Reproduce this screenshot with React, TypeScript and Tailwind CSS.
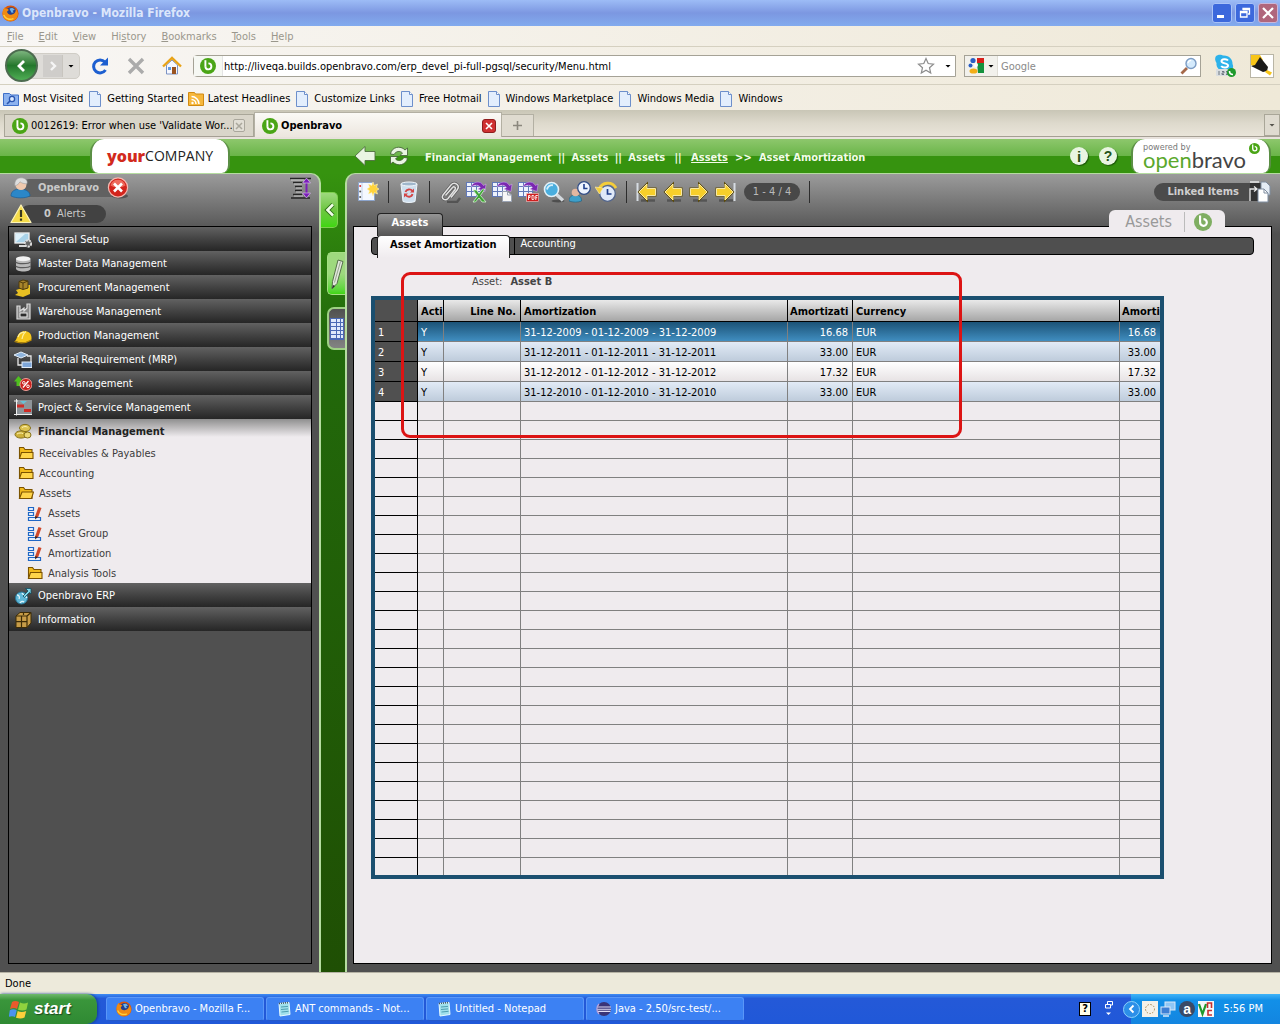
import React, { useState } from 'react';

type IconProps = { className?: string };

function Glyph({ box = 22, className = 'w-[22px] h-[22px]', children }: { box?: number; className?: string; children: React.ReactNode }) {
    return (
        <svg viewBox={`0 0 ${box} ${box}`} className={`shrink-0 ${className}`} fill="none" aria-hidden="true">
            {children}
        </svg>
    );
}

/* ---------- logos ---------- */

function BravoMark({ className = 'w-4 h-4', color = '#4aa516' }: IconProps & { color?: string }) {
    return (
        <Glyph box={16} className={className}>
            <circle cx="8" cy="8" r="8" fill={color} />
            <path d="M5.4 2.2v6.6" stroke="#fff" strokeWidth="1.9" />
            <path d="M5.4 8.6a3 3 0 1 0 3-3.2" stroke="#fff" strokeWidth="1.9" />
        </Glyph>
    );
}

function FirefoxMark({ className = 'w-4 h-4' }: IconProps) {
    return (
        <Glyph box={16} className={className}>
            <circle cx="8" cy="8" r="7.6" fill="#d9560b" />
            <circle cx="8.600" cy="6.600" r="4.600" fill="#23408f" />
            <path d="M7 3.500c1.500-1.200 4-.8 5 1l-2 .8 1 1.700-2 .2z" fill="#6fb5e8" />
            <path d="M.6 6C1 3.800 2 2.600 3 2l.4 1.800C4.600 3.400 5.500 3.700 6.400 4.600L4.800 6.200c0 2.200 2.400 3.600 4.600 2.800 2-.5 3.600-2 3.800-5 2 2.600 2.400 5.400.8 8-2 3-6.400 4.200-9.800 2.400C1.200 12.800 0 9.400.6 6z" fill="#f08a12" />
            <path d="M1.600 9.500c1.400 3.400 5.600 4.900 9.200 3.300" stroke="#ffd23c" strokeWidth="1.300" />
        </Glyph>
    );
}

/* ---------- browser chrome icons ---------- */

function ReloadIcon() {
    return (
        <Glyph box={20} className="w-5 h-5">
            <path d="M15.500 14a6.500 6.500 0 1 1-.6-8" stroke="#1d5fd0" strokeWidth="3" />
            <path d="M18 1.500v8h-8z" fill="#1d5fd0" />
        </Glyph>
    );
}

function StopIcon() {
    return (
        <Glyph box={20} className="w-5 h-5">
            <path d="M3 3l14 14M17 3L3 17" stroke="#ababab" strokeWidth="3.400" />
        </Glyph>
    );
}

function HomeIcon() {
    return (
        <Glyph box={20} className="w-5 h-5">
            <path d="M4.500 9v9h11V9L10 4z" fill="#f6f8ff" stroke="#7c93c4" />
            <path d="M1 10.500L10 2l9 8.500" stroke="#e8a317" strokeWidth="2.400" />
            <rect x="6" y="11" width="3" height="3" fill="#5f9be6" />
            <rect x="10" y="11" width="4" height="7" fill="#9a5420" />
        </Glyph>
    );
}

function PageIcon() {
    return (
        <Glyph box={16} className="w-4 h-4">
            <path d="M2.500.5h8l3 3v12h-11z" fill="#e3eefd" stroke="#6d8fcb" />
            <path d="M10.500.5v3h3" fill="#fff" stroke="#6d8fcb" />
        </Glyph>
    );
}

function SearchFolderIcon() {
    return (
        <Glyph box={16} className="w-4 h-4">
            <path d="M.5 2.500h6l1.500 1.500h7.500v10.500H.5z" fill="#8db2ef" stroke="#3f6fc8" />
            <circle cx="9" cy="8" r="2.600" fill="#dceaff" stroke="#2b55b0" strokeWidth="1.300" />
            <path d="M7 10l-3 3" stroke="#2b55b0" strokeWidth="1.600" />
        </Glyph>
    );
}

function FeedIcon() {
    return (
        <Glyph box={16} className="w-4 h-4">
            <path d="M.5 1.500h6l1 1.500h8v11.500H.5z" fill="#f6b73c" stroke="#d08a12" />
            <circle cx="4.500" cy="12" r="1.200" fill="#fff" />
            <path d="M3.500 8.500a4.500 4.500 0 0 1 4.500 4.500M3.500 5.500A7.500 7.500 0 0 1 11 13" stroke="#fff" strokeWidth="1.500" />
        </Glyph>
    );
}

function StarIcon() {
    return (
        <Glyph box={18} className="w-[18px] h-[18px]">
            <path d="M9 1.500l2.200 5 5.300.6-4 3.600 1.200 5.300L9 13.300 4.300 16l1.200-5.300-4-3.600 5.300-.6z" fill="#fff" stroke="#8c8c8c" strokeWidth="1.200" />
        </Glyph>
    );
}

function Caret({ className = 'text-black' }: IconProps) {
    return (
        <Glyph box={6} className={`w-[6px] h-[6px] ${className}`}>
            <path d="M.5 2h5L3 4.500z" fill="currentColor" />
        </Glyph>
    );
}

function GoogleMark() {
    return (
        <Glyph box={17} className="w-[17px] h-[17px]">
            <path d="M9 1h7v5H9z" fill="#d8201a" />
            <path d="M9 6h7v10h-6z" fill="#14923e" />
            <circle cx="5" cy="3.500" r="2.600" fill="#2a5fc4" />
            <circle cx="2.500" cy="8.500" r="2" fill="#2a5fc4" />
            <circle cx="8" cy="8" r="2" fill="#fff" />
            <ellipse cx="5.500" cy="14" rx="4" ry="2.600" fill="#f2ae18" />
        </Glyph>
    );
}

function LensIcon() {
    return (
        <Glyph box={18} className="w-[18px] h-[18px]">
            <path d="M7 11l-5.500 5.500" stroke="#a5694a" strokeWidth="2.800" />
            <circle cx="11" cy="6.500" r="5" fill="#d4eafc" stroke="#7c9cc4" strokeWidth="1.400" />
            <path d="M8 6c.4-1.600 1.600-2.600 3.200-2.600" stroke="#fff" strokeWidth="1.300" />
        </Glyph>
    );
}

function SkypeIcon() {
    return (
        <Glyph box={24} className="w-6 h-6">
            <path d="M3 2c3-2 6-1 7-.5 6-.5 10 4 9.500 8.500 2 4-1 8-5.500 7-7 1-11-3-10.500-8C2 7 1.500 4 3 2z" fill="#2db2ea" />
            <path d="M15 6.500c-1.500-2-6.500-1.500-6.500.8 0 2.700 6.500 1.500 6.500 4.200 0 2.300-5 2.800-6.800.5" stroke="#fff" strokeWidth="2" />
            <rect x="3" y="15" width="14" height="7" rx="1" fill="#d9dde0" />
            <path d="M6 17v4M9 17.500h2v1.500H9v1.500h2M13 17.500h2v3h-2M13 19h2" stroke="#6d7680" />
            <circle cx="18.500" cy="18.500" r="4.500" fill="#1f9a2c" />
            <path d="M16.500 17c0 2 1.500 3.500 3.500 3.500" stroke="#fff" strokeWidth="1.600" />
        </Glyph>
    );
}

function MarkerIcon() {
    return (
        <Glyph box={24} className="w-6 h-6">
            <rect x=".5" y=".5" width="23" height="23" fill="#fff" stroke="#b9b5a5" />
            <path d="M1 1h9l3 5-8 7-4-2z" fill="#f7c518" />
            <path d="M10 3l8 10-1 4-4 1-12-6 4-1z" fill="#1a1a1a" />
            <path d="M17 16l5 2.500-2 3-5-3.500z" fill="#f7c518" />
        </Glyph>
    );
}

/* ---------- application icons ---------- */

function UserIcon() {
    return (
        <Glyph>
            <path d="M1 19c0-5 4-7 9-7s10 2 10 7c-5 2.500-14 2.500-19 0z" fill="#2b87c9" stroke="#1a5f99" strokeWidth=".7" />
            <circle cx="11" cy="7.500" r="5.500" fill="#f0c9ae" />
            <path d="M5 9C4 4 7 .8 11 .8s7 2.500 6 6c-3 0-5-.6-7-2C9 7 7 8 5 9z" fill="#dedede" stroke="#9c9c9c" strokeWidth=".6" />
        </Glyph>
    );
}

function CloseRound() {
    return (
        <Glyph>
            <ellipse cx="13" cy="19" rx="8" ry="2.500" fill="#000" opacity=".35" />
            <circle cx="11" cy="10.500" r="9.600" fill="#d3241c" stroke="#f4b8b0" strokeWidth="1.200" />
            <path d="M3.500 8.500a7.800 7.800 0 0 1 15 0c-4 2.600-11 2.600-15 0z" fill="#ee6a5c" />
            <path d="M7 6.500l8 8M15 6.500l-8 8" stroke="#fff" strokeWidth="2.600" />
        </Glyph>
    );
}

function AlertIcon() {
    return (
        <Glyph>
            <path d="M11 2L21 19.500H1z" fill="#f6dc4a" stroke="#fff6b8" strokeWidth="1.200" strokeLinejoin="round" />
            <path d="M11 7v7M11 15.500v2.200" stroke="#3a3a20" strokeWidth="2.200" />
        </Glyph>
    );
}

function CollapseAllIcon() {
    return (
        <Glyph>
            <path d="M0 1.500h21M3 5.500h10M5 9.500h7M5 13.500h7M3 17.500h9M1 21h19" stroke="#262626" strokeWidth="1.300" />
            <path d="M1 3h13M4 7h8M6 11h6M6 15h6M4 19h9" stroke="#dcdcdc" strokeWidth=".8" />
            <path d="M16.500 4v14" stroke="#7a1fb8" strokeWidth="2" />
            <path d="M16.500 1l4 5h-8zM16.500 21l4-5h-8z" fill="#7a1fb8" stroke="#e4c9f5" strokeWidth=".6" />
        </Glyph>
    );
}

const menuIcons: Record<string, React.ReactNode> = {
    setup: (
        <>
            <rect x="1" y="2" width="14" height="10" fill="#a9d3ea" stroke="#f2f2f2" strokeWidth="1.300" />
            <path d="M2 11l9-8H2z" fill="#dff1fa" />
            <path d="M5 15h7" stroke="#d8d8d8" strokeWidth="2" />
            <circle cx="14" cy="12.500" r="3.200" fill="#666" stroke="#ddd" strokeWidth="2" strokeDasharray="2.200 .9" />
        </>
    ),
    master: (
        <>
            <path d="M2 3.500v10c0 2 3.500 3 7.500 3s7-1 7-3v-10z" fill="#b9b9b9" />
            <path d="M2 7c1 2.200 13 2.200 14.500 0M2 11c1 2.200 13 2.200 14.500 0" stroke="#5c5c5c" strokeWidth="1.300" />
            <ellipse cx="9.200" cy="3.800" rx="7.200" ry="2.500" fill="#f1f1f1" />
        </>
    ),
    procurement: (
        <>
            <path d="M5 10l8-1-1-3h4v9l-7 3-8-2 3-2-2-3z" fill="#e8c022" />
            <path d="M5 2.500l4-1.500 5 1v7l-5 1.500-4-1.500z" fill="#a8842a" stroke="#4f3b0c" />
            <path d="M5 2.500l4 1.500 5-2M9 4v6" stroke="#4f3b0c" />
        </>
    ),
    warehouse: (
        <>
            <path d="M3 16V3h3v5l4-3v3l3-3V1h3v15z" fill="#8b8b8b" stroke="#dcdcdc" strokeWidth="1.200" />
            <rect x="6" y="10" width="7" height="4" fill="#2b2b2b" stroke="#eee" />
        </>
    ),
    production: (
        <>
            <path d="M1 14c2-1 2-9 9-10 6 0 8 4 7.500 8.500-5 3.500-11 3.500-16.500 1.500z" fill="#f4c61c" />
            <path d="M4 10c1-3 3-4.500 6-4.800M8 12c.5-3 2-6 4-7.500" stroke="#fdf0a0" strokeWidth="1.300" />
            <path d="M.5 14.500c5 2 11 2 17-1.500" stroke="#b88a08" strokeWidth="1.300" />
        </>
    ),
    mrp: (
        <>
            <path d="M7 1l7 3-7 3-7-3z" fill="#8fb4dc" stroke="#e4edf7" />
            <path d="M4 7v7h4M13 5h4v6" stroke="#e8e8e8" strokeWidth="1.300" />
            <rect x="8" y="11" width="10" height="5.500" fill="#7ea6d8" stroke="#e4edf7" />
        </>
    ),
    sales: (
        <>
            <path d="M4.500 1L9 6.500H6.500V11h-4V6.500H0z" fill="#4fc01f" />
            <circle cx="12" cy="9.500" r="6" fill="#c9211d" stroke="#f1a09a" />
            <path d="M9 12.500l5.500-6.500" stroke="#fff" strokeWidth="1.300" />
            <circle cx="9.800" cy="7.800" r="1.300" stroke="#fff" />
            <circle cx="14" cy="11.300" r="1.300" stroke="#fff" />
        </>
    ),
    project: (
        <>
            <path d="M2 1h16v15H2z" fill="#8e9499" />
            <path d="M2.500 0v16.500M0 15.500h18M0 2h4" stroke="#f0f0f0" />
            <path d="M6 2h7l-3.500 3z" fill="#68c2d8" />
            <rect x="3" y="5.500" width="7" height="3" fill="#cf2b25" />
            <rect x="10" y="10" width="7" height="3" fill="#cf2b25" />
        </>
    ),
    financial: (
        <>
            <ellipse cx="11" cy="5" rx="5.500" ry="3.600" fill="#dcc250" stroke="#85701a" />
            <ellipse cx="7" cy="11.500" rx="6" ry="3.600" fill="#cdb03a" stroke="#85701a" />
            <ellipse cx="13.500" cy="12" rx="3.500" ry="3" fill="#ecd978" stroke="#85701a" />
            <path d="M8 4.500c2-1.200 4-1.200 5.500-.3M3 11c2-1.200 4-1.300 6-.5" stroke="#fff5b8" />
        </>
    ),
    erp: (
        <>
            <circle cx="7.500" cy="11" r="6" fill="#5fb8d8" stroke="#2b7898" />
            <path d="M3 8c2 0 3 2 2 4M8 6c1 2 4 3 5 5M6 16c1-2 3-2 4-1" stroke="#e2f5fb" strokeWidth="1.300" />
            <path d="M9 9l5-5-2.500-2.500H17V7l-1.500-1.500-5 5z" fill="#7fd7ea" stroke="#124a5c" strokeWidth=".8" />
        </>
    ),
    info: (
        <>
            <path d="M2 5l4-3.500h11V12l-4 4.500H2z" fill="#c79c48" stroke="#3d2c08" />
            <path d="M2 5h11v11.500M13 5l4-3.500M7.500 5v11.500M2 10.700h11M9.500 2v2" stroke="#3d2c08" strokeWidth="1.200" />
        </>
    ),
};

function MenuIcon({ name }: { name: string }) {
    return <Glyph box={18} className="w-[18px] h-[18px]">{menuIcons[name]}</Glyph>;
}

function FolderIcon({ open }: { open?: boolean }) {
    return (
        <Glyph box={16} className="w-4 h-4">
            <path d="M1.500 12.500v-11h4l1.500 2h7v9z" fill="#f2bb1d" stroke="#7c5300" strokeWidth="1.100" />
            <path d={open ? 'M1.500 12.500l2.500-6.500h11.500l-2 6.500z' : 'M1.500 12.500l2-6h11.500v6z'} fill="#ffd54a" stroke="#7c5300" strokeWidth="1.100" />
        </Glyph>
    );
}

function WindowIcon() {
    return (
        <Glyph box={16} className="w-4 h-4">
            <path d="M1.500 1.500h5v3h-5zM1.500 6.500h5v3h-5zM1.500 11.500h12v3h-12z" fill="#e2efff" stroke="#1f67c6" strokeWidth="1.200" />
            <path d="M13 1.500L9.500 11" stroke="#d04a2c" strokeWidth="3.200" />
            <path d="M8.200 13.500l0-3.500 2.500 1z" fill="#40200f" />
        </Glyph>
    );
}

function SheetGrid() {
    return (
        <>
            <path d="M1 1h15v15H1z" fill="#6279b8" />
            <path d="M2 2h4v3H2zM7 2h4v3H7zM12 2h3v3h-3zM2 6h4v4H2zM7 6h4v4H7zM12 6h3v4h-3zM2 11h4v4H2zM7 11h4v4H7zM12 11h3v4h-3z" fill="#eef3fd" />
            <path d="M6 6c2-6 10-6.500 12.500-1.500l2.500-1.500-1 7.500-7-2.500 2.500-1.500c-2-3-6-3-9.500-.5z" fill="#7a28b0" stroke="#dcb8f0" strokeWidth=".5" />
        </>
    );
}

const toolIcons: Record<string, React.ReactNode> = {
    New: (
        <>
            <path d="M1.500 1.500h13l3 3v15h-16z" fill="#f4f8ff" stroke="#8ca4cc" />
            <path d="M5 2v17" stroke="#c3d0e6" />
            <circle cx="3.200" cy="5" r="1" fill="#d42a2a" />
            <circle cx="3.200" cy="10.500" r="1" fill="#555" />
            <circle cx="3.200" cy="16" r="1" fill="#555" />
            <path d="M16 1l1.300 3.400L20.500 3l-1 3.300L22 8l-2.500 1.700 1 3.300-3.200-1.400L16 15l-1.300-3.400-3.200 1.400 1-3.300L10 8l2.500-1.700-1-3.300 3.200 1.400z" fill="#ffd33c" stroke="#fff3bd" strokeWidth=".6" />
        </>
    ),
    Delete: (
        <>
            <path d="M3 3l2 17.500c3 1.300 9 1.300 12 0L19 3z" fill="#cfdfee" stroke="#eef5fb" />
            <ellipse cx="11" cy="3" rx="8" ry="2" fill="#9fb6cb" stroke="#f3f8fc" />
            <path d="M7.500 11c1-3 5-3.500 7-1M14.500 13c-1 3.500-5 3.500-7 1" stroke="#d24545" strokeWidth="1.900" />
            <path d="M16 7.500v4h-4zM6 16.500v-4h4z" fill="#d24545" />
        </>
    ),
    Attachments: (
        <>
            <path d="M8 21h10l3-4" stroke="#000" strokeWidth="2.500" opacity=".3" />
            <path d="M6.500 14.500l7-8c1.500-1.500 3.700 0 2.500 2L9 17.500c-2.800 3-7.500 0-5-3.500L12 4c3.500-4 9.500.3 6.200 4.800L12 16.500" stroke="#5b5b5b" strokeWidth="2.800" />
            <path d="M6.500 14.500l7-8c1.500-1.500 3.700 0 2.500 2L9 17.500c-2.800 3-7.500 0-5-3.500L12 4c3.500-4 9.500.3 6.200 4.800L12 16.500" stroke="#e2e2e2" strokeWidth="1.500" />
        </>
    ),
    'Export to Excel': (
        <>
            <SheetGrid />
            <path d="M8 9h3.500l2.500 3.500L17.500 8H20l-4.500 6.500L21 21h-4l-3-4-3.500 4H8l4.500-6z" fill="#3fa535" stroke="#d5f2d0" strokeWidth=".8" />
        </>
    ),
    'Export to CSV': (
        <>
            <SheetGrid />
            <path d="M11.500 10.500h5l4 3.500v6.500h-9z" fill="#f7f7f7" stroke="#9aa3b3" />
            <path d="M16.500 10.500v3.500h4" stroke="#9aa3b3" />
        </>
    ),
    'Export to PDF': (
        <>
            <SheetGrid />
            <rect x="9.500" y="12.500" width="12" height="8" fill="#cf1f1f" stroke="#f5c5c5" strokeWidth=".6" />
            <path d="M11.500 19v-4.500h1.500v2h-1.500M15 14.500v4h1.500l.5-1v-2l-.5-1zM18.800 19v-4.500h2M18.800 16.700h1.500" stroke="#fff" strokeWidth=".9" />
        </>
    ),
    Search: (
        <>
            <ellipse cx="15" cy="20" rx="6.500" ry="1.500" fill="#000" opacity=".35" />
            <path d="M13 13l7 6.500" stroke="#d4d9de" strokeWidth="3.400" />
            <circle cx="8.500" cy="8.500" r="7" fill="#4aaede" stroke="#e3f1f8" strokeWidth="1.600" />
            <path d="M4 8.500c.5-3 3-4.800 6-4.300" stroke="#d4effb" strokeWidth="1.900" />
        </>
    ),
    'Audit trail': (
        <>
            <path d="M0 20c0-4 2.500-6 6.500-6s6 2 6 6c-3 1.500-9 1.500-12.500 0z" fill="#3f9fc9" stroke="#1c5c7c" strokeWidth=".6" />
            <circle cx="6.500" cy="11.500" r="3.800" fill="#e3b7a0" />
            <circle cx="15" cy="7" r="6.300" fill="#eef4ff" stroke="#334d86" strokeWidth="1.300" />
            <path d="M15 3v4.500h3.500" stroke="#1f3f8c" strokeWidth="1.600" />
        </>
    ),
    History: (
        <>
            <circle cx="12.500" cy="12.500" r="7.800" fill="#dfe9f8" stroke="#52658c" strokeWidth="1.300" />
            <path d="M12.500 8v5h4" stroke="#1f3f8c" strokeWidth="1.700" />
            <path d="M4 8c3-7 13-8 17-1" stroke="#f4cd3a" strokeWidth="2.800" />
            <path d="M0 6l8 1-3.500 6z" fill="#f4cd3a" stroke="#fff2b4" strokeWidth=".6" />
        </>
    ),
};

function NavArrow({ flip, bar }: { flip?: boolean; bar?: boolean }) {
    return (
        <Glyph>
            <path d="M5 19.500h14" stroke="#000" strokeWidth="2.500" opacity=".3" />
            <g transform={flip ? 'translate(22 0) scale(-1 1)' : undefined}>
                {bar && <path d="M1.500 2v18" stroke="#d6dce2" strokeWidth="2" />}
                <path d="M3 11l8-8v4.500h8.500v7H11V19z" fill="#f7cf2b" stroke="#5e4c08" strokeWidth="2" />
                <path d="M3 11l8-8v4.500h8.500v7H11V19z" fill="#f7cf2b" stroke="#fff4b5" strokeWidth=".9" />
            </g>
        </Glyph>
    );
}

function ToolButton({ label, children }: { label: string; children: React.ReactNode }) {
    return <button type="button" aria-label={label} title={label} className="shrink-0">{children}</button>;
}

function Separator() {
    return <span className="mx-[9px] h-[22px] w-px shrink-0 bg-[#2c2c2c]" />;
}

/* ---------- browser ---------- */

function TitleBar() {
    return (
        <header className="flex h-[26px] items-center bg-linear-to-b from-[#9dbcf6] via-[#7c97e1] to-[#82abee] pl-[2px] pr-[2px]">
            <FirefoxMark className="mr-[3px] h-[17px] w-[17px]" />
            <h1 className="flex-1 text-[12px] font-bold text-[#dbe6fb]">Openbravo - Mozilla Firefox</h1>
            <div className="flex gap-[3px]">
                <button type="button" aria-label="Minimize" className="flex h-5 w-5 items-end rounded-[3px] border border-[#a9c3f7] bg-[#3c68dc] p-1">
                    <span className="h-[3px] w-[7px] bg-white" />
                </button>
                <button type="button" aria-label="Restore" className="flex h-5 w-5 items-center justify-center rounded-[3px] border border-[#a9c3f7] bg-[#3c68dc]">
                    <Glyph box={12} className="h-3 w-3">
                        <path d="M4 3V1.500h6.500V7H9M1.500 4.500H8v5.500H1.500zM1.500 5.500H8M4 2.500h6.500" stroke="#fff" strokeWidth="1.300" />
                    </Glyph>
                </button>
                <button type="button" aria-label="Close" className="flex h-5 w-5 items-center justify-center rounded-[3px] border border-[#c9b6d8] bg-[#b0667c]">
                    <Glyph box={12} className="h-3 w-3">
                        <path d="M1 1l10 10M11 1L1 11" stroke="#fff" strokeWidth="2.200" />
                    </Glyph>
                </button>
            </div>
        </header>
    );
}

const browserMenu = [['', 'F', 'ile'], ['', 'E', 'dit'], ['', 'V', 'iew'], ['Hi', 's', 'tory'], ['', 'B', 'ookmarks'], ['', 'T', 'ools'], ['', 'H', 'elp']];

function MenuBar() {
    return (
        <nav className="flex h-[21px] items-center gap-[15px] border-b border-[#d5d0c0] px-[7px] pt-[2px] text-[#9a978c]">
            {browserMenu.map(([pre, key, post]) => (
                <button type="button" key={post}>{pre}<u>{key}</u>{post}</button>
            ))}
        </nav>
    );
}

function NavBar() {
    const [url, setUrl] = useState('http://liveqa.builds.openbravo.com/erp_devel_pi-full-pgsql/security/Menu.html');
    return (
        <div className="flex h-[38px] items-center border-b border-[#d5d0c0] pl-[5px] pr-[6px]">
            <div className="flex items-center">
                <button type="button" aria-label="Back" className="z-10 flex h-[33px] w-[33px] items-center justify-center rounded-full border-2 border-[#4d6b50] bg-linear-to-b from-[#7cb57e] via-[#23772c] to-[#4fae55]">
                    <Glyph box={14} className="h-[14px] w-[14px]">
                        <path d="M9 2L4 7l5 5" stroke="#fff" strokeWidth="2.800" />
                    </Glyph>
                </button>
                <div className="-ml-2 flex h-[26px] items-center rounded-r-[5px] border border-[#d0cdc6] bg-[#dedcd8] pl-3">
                    <button type="button" aria-label="Forward" className="flex h-[22px] w-5 items-center justify-center border-r border-[#c8c5bf] bg-[#cfcdca]">
                        <Glyph box={12} className="h-3 w-3">
                            <path d="M4 2l4 4-4 4" stroke="#f5f5f5" strokeWidth="2.400" />
                        </Glyph>
                    </button>
                    <button type="button" aria-label="Recent pages" className="px-[5px]"><Caret /></button>
                </div>
            </div>
            <div className="ml-[10px] flex gap-4">
                <button type="button" aria-label="Reload"><ReloadIcon /></button>
                <button type="button" aria-label="Stop"><StopIcon /></button>
                <button type="button" aria-label="Home"><HomeIcon /></button>
            </div>
            <div className="ml-[11px] flex h-[22px] flex-1 items-center rounded-l-[4px] border border-[#a5a296] bg-white">
                <span className="flex h-full items-center border-r border-[#e4e4e4] bg-[#f6f8f3] px-[6px]"><BravoMark /></span>
                <input aria-label="Location" value={url} onChange={(e) => setUrl(e.target.value)} className="h-full min-w-0 flex-1 bg-transparent pl-[1px] pt-[2px] text-black outline-none" />
                <button type="button" aria-label="Bookmark this page"><StarIcon /></button>
                <button type="button" aria-label="Location history" className="pl-[10px] pr-1"><Caret /></button>
            </div>
            <div className="ml-2 flex h-[22px] w-[237px] items-center border border-[#a5a296] bg-white">
                <button type="button" aria-label="Search engine" className="flex h-full items-center gap-[3px] border-r border-[#e0ded6] bg-[#f2f1ec] px-[3px]">
                    <GoogleMark /><Caret />
                </button>
                <input aria-label="Search" placeholder="Google" className="h-full min-w-0 flex-1 bg-transparent pl-[3px] pt-[2px] outline-none placeholder:text-[#8a8a8a]" />
                <button type="button" aria-label="Go" className="pr-[2px]"><LensIcon /></button>
            </div>
            <button type="button" aria-label="Skype" className="ml-3"><SkypeIcon /></button>
            <button type="button" aria-label="Highlighter" className="ml-[13px]"><MarkerIcon /></button>
        </div>
    );
}

const bookmarks = ['Most Visited', 'Getting Started', 'Latest Headlines', 'Customize Links', 'Free Hotmail', 'Windows Marketplace', 'Windows Media', 'Windows'];

function BookmarkBar() {
    return (
        <nav className="flex h-[25px] items-center gap-1 px-[3px] pt-[2px] text-black">
            {bookmarks.map((b, i) => (
                <a href="#" key={b} className="flex items-center gap-1 whitespace-nowrap">
                    {i === 0 ? <SearchFolderIcon /> : i === 2 ? <FeedIcon /> : <PageIcon />}
                    {b}
                </a>
            ))}
        </nav>
    );
}

function TabStrip() {
    return (
        <div className="flex h-[29px] items-end border-b-2 border-[#e8e2dc] bg-linear-to-b from-[#c9c6b6] via-[#dedacd] to-[#eae5da] pl-1">
            <div className="flex h-[23px] w-[250px] items-center border border-b-[#a59f94] border-[#a9a698] bg-[#d9d5c9] pl-[7px] pr-2 text-black">
                <BravoMark />
                <span className="ml-[3px] flex-1 whitespace-nowrap">0012619: Error when use 'Validate Wor...</span>
                <button type="button" aria-label="Close tab" className="flex h-[13px] w-[13px] items-center justify-center rounded-[2px] border border-[#aaa79c] bg-[#e2dfd6]">
                    <Glyph box={8} className="h-2 w-2"><path d="M1 1l6 6M7 1L1 7" stroke="#aaa79c" strokeWidth="1.500" /></Glyph>
                </button>
            </div>
            <div className="flex h-[25px] w-[248px] items-center border border-b-0 border-[#b3b0a3] bg-linear-to-b from-[#fbfaf6] to-[#ece6de] pl-[7px] pr-[5px] pt-[2px] text-black">
                <BravoMark />
                <span className="ml-[3px] flex-1 font-bold">Openbravo</span>
                <button type="button" aria-label="Close tab" className="flex h-[14px] w-[14px] items-center justify-center rounded-[3px] border border-[#8e1d1d] bg-[#cf3030]">
                    <Glyph box={8} className="h-2 w-2"><path d="M1 1l6 6M7 1L1 7" stroke="#fff" strokeWidth="1.600" /></Glyph>
                </button>
            </div>
            <div className="flex h-[23px] flex-1 items-center justify-between border-b border-[#a59f94]">
                <button type="button" aria-label="New tab" className="flex h-[22px] w-8 items-center justify-center border-r border-t border-[#b3b0a3] bg-[#dfdbd0]">
                    <Glyph box={9} className="h-[9px] w-[9px]"><path d="M4.500 0v9M0 4.500h9" stroke="#8b887e" strokeWidth="1.600" /></Glyph>
                </button>
                <button type="button" aria-label="All tabs" className="flex h-[22px] w-4 items-center justify-center border border-[#a9a698] bg-[#dfdbd0]"><Caret className="text-[#55534c]" /></button>
            </div>
        </div>
    );
}

/* ---------- application ---------- */

function AppHeader() {
    return (
        <div className="flex h-[34px] items-stretch bg-linear-to-b from-[#8dc76c] from-0% via-[#6ab548] via-49% to-[#36930f] to-50%">
            <div className="w-[345px] shrink-0 pl-[90px]">
                <a href="#" className="flex h-full w-[140px] items-center justify-center rounded-[14px_14px_8px_8px] border-x-2 border-[#5b8f45] bg-white">
                    <span className="font-['Open_Sans',sans-serif] text-[16px] font-extrabold leading-none text-[#d22a1c]">your</span>
                    <span className="font-['Open_Sans',sans-serif] text-[14px] leading-none text-[#222]">COMPANY</span>
                </a>
            </div>
            <div className="flex min-w-0 flex-1 items-center pl-[9px]">
                <button type="button" aria-label="Go back">
                    <Glyph>
                        <path d="M1 11L11 1.500V6.500h10v9H11v5z" fill="#e9f5e2" stroke="#4e6f40" strokeWidth=".9" />
                    </Glyph>
                </button>
                <button type="button" aria-label="Refresh" className="ml-3">
                    <Glyph>
                        <path d="M2.500 9c1-7 10-9 14.500-4l2.500-2v7.500H12L14.500 8C12 5.500 8 6 6 9.500z" fill="#e9f5e2" stroke="#3c5a30" strokeWidth=".8" />
                        <path d="M19.500 13c-1 7-10 9-14.500 4l-2.500 2v-7.500H10L7.500 14c2.500 2.500 6.500 2 8.500-1.500z" fill="#e9f5e2" stroke="#3c5a30" strokeWidth=".8" />
                    </Glyph>
                </button>
                <nav aria-label="Breadcrumb" className="ml-[15px] flex flex-1 whitespace-nowrap pt-1 font-bold text-[#f3fbe9]">
                    <span>Financial Management</span>
                    <span className="w-5 text-center">||</span>
                    <span>Assets</span>
                    <span className="w-5 text-center">||</span>
                    <span>Assets</span>
                    <span className="w-[26px] text-center">||</span>
                    <a href="#" className="underline">Assets</a>
                    <span className="w-[31px] text-center">&gt;&gt;</span>
                    <span>Asset Amortization</span>
                </nav>
                <button type="button" aria-label="About" className="mr-[11px] flex h-[18px] w-[18px] items-center justify-center rounded-full bg-[#e9f5e2] font-['Liberation_Sans',sans-serif] text-[15px] font-bold leading-none text-[#26521a] shadow-[1px_1px_1px_#1d5a08]">i</button>
                <button type="button" aria-label="Help" className="mr-[14px] flex h-[18px] w-[18px] items-center justify-center rounded-full bg-[#e9f5e2] font-['Liberation_Sans',sans-serif] text-[14px] font-bold leading-none text-[#26521a] shadow-[1px_1px_1px_#1d5a08]">?</button>
                <a href="#" className="relative mr-[9px] flex h-full w-[140px] flex-col rounded-[14px_14px_8px_8px] border-x-2 border-[#5b8f45] bg-white pl-[10px] text-[#777]">
                    <span className="pt-[3px] text-[9px] leading-[10px]">powered by</span>
                    <span className="font-['Lato',sans-serif] text-[22px] leading-[16px] text-[#444]"><span className="text-[#5aa82c]">open</span>bravo</span>
                    <BravoMark className="absolute right-[9px] top-1 h-[11px] w-[11px]" />
                </a>
            </div>
        </div>
    );
}

const modulesTop = [
    ['setup', 'General Setup'],
    ['master', 'Master Data Management'],
    ['procurement', 'Procurement Management'],
    ['warehouse', 'Warehouse Management'],
    ['production', 'Production Management'],
    ['mrp', 'Material Requirement (MRP)'],
    ['sales', 'Sales Management'],
    ['project', 'Project & Service Management'],
];
const modulesBottom = [['erp', 'Openbravo ERP'], ['info', 'Information']];

const tree = [
    { label: 'Receivables & Payables', kind: 'folder', nested: false },
    { label: 'Accounting', kind: 'folder', nested: false },
    { label: 'Assets', kind: 'open', nested: false },
    { label: 'Assets', kind: 'window', nested: true },
    { label: 'Asset Group', kind: 'window', nested: true },
    { label: 'Amortization', kind: 'window', nested: true },
    { label: 'Analysis Tools', kind: 'folder', nested: true },
];

function ModuleRow({ icon, label }: { icon: string; label: string }) {
    return (
        <button type="button" className="flex h-6 w-full items-center gap-[6px] bg-linear-to-b from-[#626262] to-[#262626] pl-[5px] pt-[2px] text-left text-white">
            <MenuIcon name={icon} />
            {label}
        </button>
    );
}

function Sidebar() {
    return (
        <aside className="flex w-[321px] shrink-0 flex-col rounded-tr-[10px] border-r-2 border-t border-[#b5dca0] bg-[#505050] bg-[linear-gradient(#9b9b9b,#505050_60px)] pb-2 pl-2 pr-[7px]">
            <div className="flex h-[27px] items-center justify-between">
                <div className="flex items-center">
                    <span className="z-10 ml-[2px]"><UserIcon /></span>
                    <span className="-ml-3 flex h-[18px] items-center rounded-full bg-[#616161] pl-[18px] pr-[22px] font-bold text-[#c9c9c9]">Openbravo</span>
                    <button type="button" aria-label="Log out" className="-ml-[14px]"><CloseRound /></button>
                </div>
                <button type="button" aria-label="Collapse all"><CollapseAllIcon /></button>
            </div>
            <div className="flex h-[25px] items-center">
                <span className="z-10 ml-[2px]"><AlertIcon /></span>
                <a href="#" className="-ml-3 flex h-[18px] items-center gap-[6px] rounded-full bg-[#424242] pl-6 pr-5 text-[#c9c9c9]"><b>0</b> Alerts</a>
            </div>
            <nav className="flex-1 border border-black">
                {modulesTop.map(([icon, label]) => <ModuleRow key={label} icon={icon} label={label} />)}
                <div className="bg-[#efebee] bg-[linear-gradient(#8f8f8f,#efebee_18px)]">
                    <button type="button" className="flex h-6 w-full items-center gap-[6px] pl-[5px] pt-[2px] font-bold text-[#222]">
                        <MenuIcon name="financial" />
                        Financial Management
                    </button>
                    {tree.map((item) => (
                        <a href="#" key={item.label + item.kind} className={`flex h-5 items-center gap-[5px] pt-[2px] text-[#3c3c3c] ${item.nested ? 'pl-[18px]' : 'pl-[9px]'}`}>
                            {item.kind === 'window' ? <WindowIcon /> : <FolderIcon open={item.kind === 'open'} />}
                            {item.label}
                        </a>
                    ))}
                </div>
                {modulesBottom.map(([icon, label]) => <ModuleRow key={label} icon={icon} label={label} />)}
            </nav>
        </aside>
    );
}

function ViewStrip() {
    return (
        <div className="flex w-6 shrink-0 flex-col bg-linear-to-b from-[#36930f] via-[#226a0b] via-20% to-[#1f4f04]">
            <button type="button" aria-label="Hide menu" className="mt-[19px] flex h-9 w-[17px] items-center justify-center rounded-r-[5px] border border-l-0 border-[#7fd050] bg-linear-to-b from-[#9ed97e] via-[#6cc63e] to-[#3fd60e]">
                <Glyph box={14} className="h-[14px] w-[14px]">
                    <path d="M11 1.500L5.500 7 11 12.500" stroke="#2c6a15" strokeWidth="4.500" />
                    <path d="M11 1.500L5.500 7 11 12.500" stroke="#f2ffe9" strokeWidth="2.600" />
                </Glyph>
            </button>
            <button type="button" aria-label="Edition view" className="mt-6 flex h-[43px] w-[18px] items-center justify-center self-end rounded-l-[5px] border border-r-0 border-[#a5e083] bg-linear-to-b from-[#9ed97e] from-50% to-[#3fd60e]">
                <svg viewBox="0 0 16 34" className="h-[34px] w-4" fill="none" aria-hidden="true">
                    <path d="M9 3l5 1.500-6 22-5 5 .5-7z" fill="#e2e8dc" stroke="#56704a" />
                    <path d="M11.500 4.500l-6 21" stroke="#98a890" />
                    <path d="M3 32l1-4 2 1z" fill="#2d2d2d" />
                </svg>
            </button>
            <button type="button" aria-label="Grid view" className="mt-3 flex h-[43px] w-[18px] items-center justify-center self-end rounded-l-[7px] border-2 border-r-0 border-[#9fd085] bg-linear-to-b from-[#505050] to-[#838383]">
                <svg viewBox="0 0 16 24" className="h-6 w-4" aria-hidden="true">
                    <path d="M1 1h14v22H1z" fill="#4a68b4" />
                    <path d="M2 2h5v3H2zM8 2h3v3H8zM12 2h2v3h-2zM2 6h5v3H2zM8 6h3v3H8zM12 6h2v3h-2zM2 10h5v3H2zM8 10h3v3H8zM12 10h2v3h-2zM2 14h5v3H2zM8 14h3v3H8zM12 14h2v3h-2zM2 18h5v3H2zM8 18h3v3H8zM12 18h2v3h-2z" fill="#dfe9fb" />
                </svg>
            </button>
            <span className="flex-1" />
        </div>
    );
}

function Toolbar() {
    return (
        <div className="flex h-[36px] items-center pl-[10px] pr-[9px]">
            <ToolButton label="New"><Glyph>{toolIcons.New}</Glyph></ToolButton>
            <Separator />
            <ToolButton label="Delete"><Glyph>{toolIcons.Delete}</Glyph></ToolButton>
            <Separator />
            <div className="flex gap-1">
                {Object.keys(toolIcons).slice(2).map((label) => (
                    <ToolButton key={label} label={label}><Glyph>{toolIcons[label]}</Glyph></ToolButton>
                ))}
            </div>
            <Separator />
            <div className="flex gap-1">
                <ToolButton label="First record"><NavArrow bar /></ToolButton>
                <ToolButton label="Previous record"><NavArrow /></ToolButton>
                <ToolButton label="Next record"><NavArrow flip /></ToolButton>
                <ToolButton label="Last record"><NavArrow flip bar /></ToolButton>
            </div>
            <span className="ml-2 flex h-[18px] w-14 items-center justify-center rounded-full bg-[#484848] text-[#b9b9b9]">1 - 4 / 4</span>
            <Separator />
            <a href="#" className="ml-auto flex items-center font-bold text-[#cfcfcf]">
                <span className="-mr-[2px] flex h-[18px] items-center rounded-l-full bg-[#4b4b4b] pl-[13px] pr-3">Linked Items</span>
                <Glyph>
                    <rect x="1" y="2" width="11" height="18" fill="#333" />
                    <path d="M1 1h9M1 20V8h6M5 5.500L8 8l-3 2.500" stroke="#e8e8e8" strokeWidth="1.300" />
                    <path d="M12 1h5l4 4v9h-9z" fill="#e4ecf5" stroke="#7f8da0" />
                    <path d="M9 8h6l4 4v9H9z" fill="#fff" stroke="#7f8da0" />
                    <path d="M15 8v4h4" stroke="#7f8da0" />
                </Glyph>
            </a>
        </div>
    );
}

const records = [
    { active: 'Y', line: '', name: '31-12-2009 - 01-12-2009 - 31-12-2009', amount: '16.68', currency: 'EUR' },
    { active: 'Y', line: '', name: '31-12-2011 - 01-12-2011 - 31-12-2011', amount: '33.00', currency: 'EUR' },
    { active: 'Y', line: '', name: '31-12-2012 - 01-12-2012 - 31-12-2012', amount: '17.32', currency: 'EUR' },
    { active: 'Y', line: '', name: '31-12-2010 - 01-12-2010 - 31-12-2010', amount: '33.00', currency: 'EUR' },
];

const emptyRows = Array.from({ length: 25 }, (_, i) => i);

function rowStyle(index: number) {
    if (index === 0) return 'bg-linear-to-b from-[#1c5377] to-[#4291c4] text-white';
    return index % 2 ? 'bg-linear-to-b from-[#e2ebf6] to-[#bccada] text-black' : 'bg-linear-to-b from-white to-[#e6e1e3] text-black';
}

function Grid() {
    const th = 'overflow-hidden border-b border-r border-black pb-0 pr-0 pt-[2px] text-left font-bold whitespace-nowrap';
    const td = 'overflow-hidden border-b border-r border-[#808080] pb-0 pt-[2px] whitespace-nowrap';
    return (
        <div className="ml-[17px] mr-[107px] mt-[6px] h-[583px] overflow-hidden border-4 border-[#1b4f6f]">
            <table className="w-full table-fixed border-separate border-spacing-0 text-black">
                <colgroup>
                    <col className="w-[43px]" />
                    <col className="w-[26px]" />
                    <col className="w-[77px]" />
                    <col className="w-[267px]" />
                    <col className="w-[65px]" />
                    <col />
                    <col className="w-[40px]" />
                </colgroup>
                <thead>
                    <tr className="h-[22px] bg-linear-to-b from-[#e9e9e9] to-[#a3a3a3]">
                        <th scope="col" aria-label="Row" className={`${th} bg-[#505050]`} />
                        <th scope="col" className={`${th} pl-[3px]`}>Acti</th>
                        <th scope="col" className="border-b border-r border-black pb-0 pr-1 pt-[2px] text-right font-bold">Line No.</th>
                        <th scope="col" className={`${th} pl-[3px]`}>Amortization</th>
                        <th scope="col" className={`${th} pl-[2px]`}>Amortizati</th>
                        <th scope="col" className={`${th} pl-[3px]`}>Currency</th>
                        <th scope="col" className={`${th} border-r-0 pl-[2px]`}>Amorti</th>
                    </tr>
                </thead>
                <tbody>
                    {records.map((r, i) => (
                        <tr key={r.name} className={`h-5 ${rowStyle(i)}`}>
                            <td className="border-b border-r border-black bg-[#505050] pb-0 pl-[3px] pr-0 pt-[2px] text-white">{i + 1}</td>
                            <td className={`${td} pl-[3px] pr-0`}>{r.active}</td>
                            <td className={`${td} px-[3px]`}>{r.line}</td>
                            <td className={`${td} px-[3px]`}>{r.name}</td>
                            <td className={`${td} pl-0 pr-1 text-right`}>{r.amount}</td>
                            <td className={`${td} px-[3px]`}>{r.currency}</td>
                            <td className={`${td} border-r-0 pl-0 pr-1 text-right`}>{r.amount}</td>
                        </tr>
                    ))}
                    {emptyRows.map((i) => (
                        <tr key={i} className="h-[19px]">
                            <td className="border-b border-r border-black p-0" />
                            <td className={td} />
                            <td className={td} />
                            <td className={td} />
                            <td className={td} />
                            <td className={td} />
                            <td className={`${td} border-r-0`} />
                        </tr>
                    ))}
                </tbody>
            </table>
        </div>
    );
}

function Workspace() {
    return (
        <main className="flex min-w-0 flex-1 flex-col rounded-tl-[10px] border-l-2 border-t border-[#b5dca0] bg-[#505050] bg-[linear-gradient(#9b9b9b,#505050_60px)]">
            <Toolbar />
            <div className="z-10 -mb-[10px] flex h-[26px] items-start justify-between pl-[30px] pr-[55px]">
                <a href="#" className="flex h-[23px] w-[66px] items-center justify-center self-end rounded-t-[4px] border border-b-0 border-[#222] bg-linear-to-b from-[#959595] to-[#555] pb-1 font-bold text-white">Assets</a>
                <h2 className="flex h-[24px] items-center rounded-t-[6px] bg-[#efebee] pl-4 text-[16px] text-[#999]">
                    Assets
                    <span className="ml-3 flex h-5 items-center border-l border-[#bbb] pl-[9px] pr-[13px]">
                        <BravoMark className="h-[18px] w-[18px]" color="#7fae62" />
                    </span>
                </h2>
            </div>
            <section className="relative mb-2 ml-[6px] mr-2 flex-1 border border-black bg-[#efebee] pt-[10px]">
                <div className="mx-[17px] flex h-[18px] rounded-[4px] border border-black bg-[#4f4f4f] pl-[5px]">
                    <a href="#" className="-mt-[3px] flex h-[23px] items-center rounded-t-[4px] border border-b-0 border-[#222] bg-linear-to-b from-white to-[#efebee] px-3 pb-1 font-bold text-black">Asset Amortization</a>
                    <a href="#" className="ml-1 flex items-center border-l border-black pb-1 pl-[6px] text-white">Accounting</a>
                </div>
                <p className="mt-[20px] flex gap-2 pl-[118px] text-[#444]">Asset: <b>Asset B</b></p>
                <div className="h-px" />
                <Grid />
                {/* hand-drawn highlight over the first records */}
                <span className="pointer-events-none absolute left-[47px] right-[309px] top-[45px] h-[166px] rounded-[9px] border-3 border-[#dc1414]" />
            </section>
        </main>
    );
}

/* ---------- desktop ---------- */

function NotepadIcon() {
    return (
        <Glyph box={16} className="w-4 h-4">
            <path d="M3 2.500l10-1 1 12-10 1.500z" fill="#9fe0ec" stroke="#e8fbff" />
            <path d="M3 2.500l10-1" stroke="#44585c" strokeWidth="1.600" strokeDasharray="1 1" />
            <path d="M5 6l7-.6M5 8.500l7-.6M5.500 11l7-.7" stroke="#4e9fb2" />
        </Glyph>
    );
}

function EclipseIcon() {
    return (
        <Glyph box={16} className="w-4 h-4">
            <circle cx="8" cy="8" r="7" fill="#3a3478" />
            <path d="M1 6h14M1 8.200h14M1.500 10.400h13" stroke="#e2def5" strokeWidth="1.100" />
            <path d="M3 3a7 7 0 0 0 0 10" stroke="#b9a4dc" strokeWidth="1.300" />
        </Glyph>
    );
}

const tasks = [
    { label: 'Openbravo - Mozilla F...', icon: <FirefoxMark /> },
    { label: 'ANT commands - Not...', icon: <NotepadIcon /> },
    { label: 'Untitled - Notepad', icon: <NotepadIcon /> },
    { label: 'Java - 2.50/src-test/...', icon: <EclipseIcon /> },
];

function Taskbar() {
    return (
        <footer className="flex h-[30px] items-stretch bg-linear-to-b from-[#3f8cf3] from-0% via-[#2459d8] via-15% to-[#2058d8] text-white">
            <button type="button" className="flex w-[97px] items-center gap-[5px] rounded-r-[10px] bg-linear-to-b from-[#6fb96d] via-[#3a963b] via-20% to-[#2f8a33] pl-[9px] shadow-[1px_0_3px_#123c8f]">
                <Glyph box={20} className="w-5 h-5">
                    <path d="M3 3c2-1.500 4.500-1.500 7 0L8 10C6 8.800 4 8.800 1 10z" fill="#ea5a2c" />
                    <path d="M11 3.500c2.500 1.200 5.500 1.200 8 0L17.500 10.500c-2.500 1.300-5.500 1.300-8.500.2z" fill="#8fd23e" />
                    <path d="M.8 11.200c2-1.300 4.700-1.300 6.900 0L6 18c-2-1-4-1-6.300 0z" fill="#4b93f0" />
                    <path d="M8.700 12c2.500 1.200 5.500 1.200 8.500 0L15.500 18.500c-2.500 1.300-5.500 1.300-8.500.2z" fill="#fbd03c" />
                </Glyph>
                <span className="font-['Liberation_Sans',sans-serif] text-[17px] font-bold italic [text-shadow:1px_1px_1px_#1c4a1e]">start</span>
            </button>
            <div className="flex min-w-0 flex-1 items-center gap-[2px] pl-[9px]">
                {tasks.map((t) => (
                    <button type="button" key={t.label} className="flex h-6 w-[158px] items-center gap-[3px] whitespace-nowrap rounded-[3px] border border-[#5a97f8] border-b-[#2558c8] bg-[#3c81f3] pl-[9px]">
                        {t.icon}
                        {t.label}
                    </button>
                ))}
            </div>
            <div className="flex items-center gap-[10px] pr-[14px]">
                <span className="flex h-[14px] w-3 items-center justify-center border border-black bg-[#fffde8] font-bold text-black">?</span>
                <Glyph box={16} className="w-4 h-4">
                    <path d="M6.500 3V.5h5V4H9M4.500 3.500h5V7h-5z" stroke="#fff" />
                    <path d="M5 11.500h5L7.500 14z" fill="#fff" />
                </Glyph>
            </div>
            <div className="flex items-center bg-linear-to-b from-[#3fb4f8] from-0% via-[#1290e8] via-20% to-[#1385e0] pr-[17px]">
                <button type="button" aria-label="Show hidden icons" className="-ml-2 mr-[2px] flex h-[17px] w-[17px] items-center justify-center rounded-full border border-[#8cd0fb] bg-[#2c8fe8]">
                    <Glyph box={10} className="h-[10px] w-[10px]"><path d="M6.500 1.500L3 5l3.500 3.500" stroke="#fff" strokeWidth="1.800" /></Glyph>
                </button>
                <Glyph box={16} className="mr-[2px] w-4 h-4">
                    <rect width="16" height="16" fill="#f4f1e8" />
                    <circle cx="8" cy="8" r="4.500" stroke="#a8864e" strokeDasharray="1.500 1.500" />
                </Glyph>
                <Glyph box={16} className="mr-[3px] w-4 h-4">
                    <rect x="5" y="1" width="10" height="8" fill="#8fc6f5" stroke="#dbe9f8" />
                    <rect x="1" y="6" width="9" height="7" fill="#3e7fd4" stroke="#dbe9f8" />
                    <path d="M3 15h6" stroke="#dbe9f8" strokeWidth="1.500" />
                </Glyph>
                <span className="mr-[3px] flex h-4 w-4 items-center justify-center rounded-full bg-[#3a4a66] font-['Liberation_Sans',sans-serif] text-[14px] font-bold leading-none">a</span>
                <Glyph box={16} className="mr-[9px] w-4 h-4">
                    <rect width="16" height="16" fill="#f8f8f8" />
                    <path d="M1 3l3.500 10L8 3" stroke="#1f9a2c" strokeWidth="2.200" />
                    <path d="M9.500 7V2h4v5M14 9.500h-4V14h4" stroke="#c93030" strokeWidth="1.600" />
                </Glyph>
                <time className="whitespace-nowrap">5:56 PM</time>
            </div>
        </footer>
    );
}

export default function App() {
    return (
        <div className="flex min-h-screen flex-col bg-[#f1eee3] font-['DejaVu_Sans_Condensed',sans-serif] text-[11px] leading-[14px]">
            <TitleBar />
            <div className="bg-linear-to-r from-[#f8f6f4] to-[#efe9d8]">
                <MenuBar />
                <NavBar />
                <BookmarkBar />
            </div>
            <TabStrip />
            <AppHeader />
            <div className="flex flex-1 bg-[#36930f]">
                <Sidebar />
                <ViewStrip />
                <Workspace />
            </div>
            <div className="flex h-[22px] items-center border-t border-[#b5b2a4] bg-[#edeadb] px-[5px] text-black">Done</div>
            <Taskbar />
        </div>
    );
}
